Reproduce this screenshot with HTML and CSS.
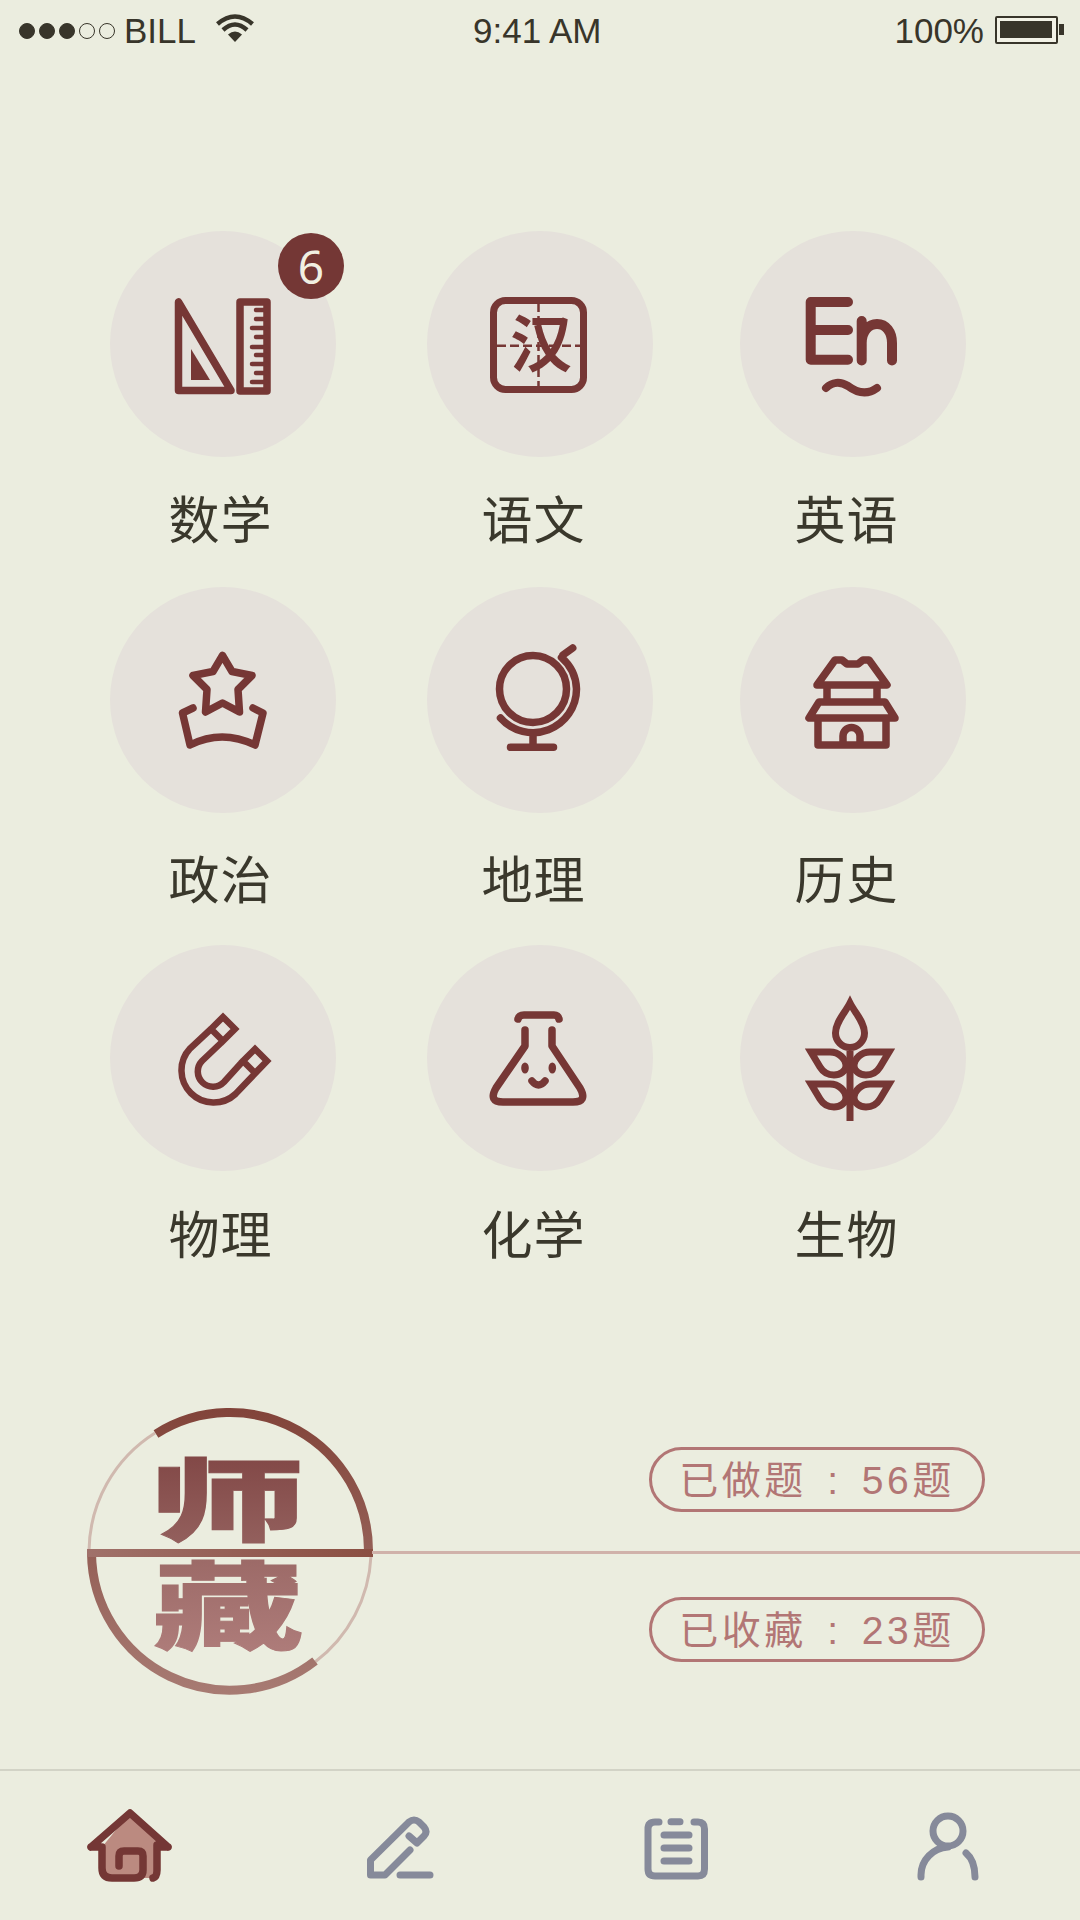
FILE: index.html
```html
<!DOCTYPE html>
<html lang="zh-CN">
<head>
<meta charset="utf-8">
<title>师藏</title>
<link rel="stylesheet" href="styles.css">
</head>
<body>
<div class="screen">
  <header class="status">
    <div class="status-left">
      <span class="dot on"></span><span class="dot on"></span><span class="dot on"></span><span class="dot"></span><span class="dot"></span>
      <span class="carrier">BILL</span>
      <svg class="wifi" viewBox="217 15 38 28"><path class="wifi-arc" d="M218.500 25Q236 10 253.500 25M224 31Q236 20 248 31"/><path class="wifi-fill" d="M229 35.500Q236 29.500 243 35.500L236 43Z"/></svg>
    </div>
    <div class="time">9:41 AM</div>
    <div class="status-right">
      <span>100%</span>
      <span class="battery"><span class="battery-level"></span></span><span class="battery-nub"></span>
    </div>
  </header>

  <main class="subjects">
    <div class="subject">
      <div class="disc">
        <svg class="ico" viewBox="110 231 226 226">
          <path class="thin" d="M178.500 302V390.500H231Z"/>
          <path class="solid" d="M191 349V380H210Z"/>
          <rect class="thin" x="240" y="302" width="27" height="89"/>
          <path class="tick" d="M267 310H256M267 319H256M267 328H252M267 337H256M267 347H252M267 355H256M267 364H252M267 373H256M267 382H252"/>
        </svg>
      </div>
      <span class="badge">6</span>
      <span class="label">数学</span>
    </div>
    <div class="subject mid">
      <div class="disc">
        <svg class="ico" viewBox="427 231 226 226">
          <rect x="493.500" y="300.500" width="90" height="89" rx="12"/>
          <path class="dash" d="M538.500 303V387M497 345.700H580"/>
          <text class="han" x="510" y="367">汉</text>
        </svg>
      </div>
      <span class="label">语文</span>
    </div>
    <div class="subject last">
      <div class="disc">
        <svg class="ico" viewBox="740 231 226 226">
          <path class="en" d="M848 302H810.700V359.700H848M810.700 330H848M861.700 321V360.500M861.700 343C861.700 331 869 324 877 324C886 324 892 332 892 343V360.500"/>
          <path class="en-tilde" d="M826 388C832 382 840 381 848 386C856 392 866 396 877 388"/>
        </svg>
      </div>
      <span class="label">英语</span>
    </div>

    <div class="subject row-two">
      <div class="disc">
        <svg class="ico" viewBox="110 587 226 226">
          <path class="bold" d="M222.500 655.500L232 671.500L252 675.500L238 689.500L239.500 712L222.500 703L205.500 712L207 689.500L193 675.500L213 671.500Z"/>
          <path class="bold" d="M193 708L182.500 713L190 745Q222 729 255 745L263 713L253 708"/>
        </svg>
      </div>
      <span class="label">政治</span>
    </div>
    <div class="subject mid row-two">
      <div class="disc">
        <svg class="ico" viewBox="427 587 226 226">
          <circle class="bold" cx="533" cy="689" r="33.500"/>
          <path class="bold" d="M561.500 657.500A43.500 43.500 0 0 1 576.500 689A43.500 43.500 0 0 1 500.500 718M563 655L572.700 648M533 733V747M510.500 747.300H553.500"/>
        </svg>
      </div>
      <span class="label">地理</span>
    </div>
    <div class="subject last row-two">
      <div class="disc">
        <svg class="ico" viewBox="740 587 226 226">
          <path class="bold" d="M817 685L835 660H842L847 664H858L863 660H869L887 685ZM827 685V702M877 685V702M819 702L809 718H895L885 702ZM818 718V745H886V718M843 745V736A8.500 8.500 0 0 1 860 736V745"/>
        </svg>
      </div>
      <span class="label">历史</span>
    </div>

    <div class="subject row-three">
      <div class="disc">
        <svg class="ico" viewBox="110 945 226 226">
          <path class="mag" d="M223 1017L235 1029L223 1041L211 1029ZM255 1049L267 1061L255 1073L243 1061ZM211 1029L190 1048.500A32.200 32.200 0 0 0 235.500 1094L267 1061M223 1041L202 1061A15.200 15.200 0 0 0 224 1082L243 1061"/>
        </svg>
      </div>
      <span class="label">物理</span>
    </div>
    <div class="subject mid row-three">
      <div class="disc">
        <svg class="ico" viewBox="427 945 226 226">
          <path class="bold" d="M518 1019Q519 1015 524 1015H554Q558 1015 559 1019M525 1030V1046L496 1088Q488 1102 503 1102H573Q588 1102 580 1088L552 1046V1030M532 1081Q538.500 1089 545 1081"/>
          <ellipse class="solid" cx="525" cy="1068" rx="3.800" ry="5.500"/>
          <ellipse class="solid" cx="552.300" cy="1068" rx="3.800" ry="5.500"/>
        </svg>
      </div>
      <span class="label">化学</span>
    </div>
    <div class="subject last row-three">
      <div class="disc">
        <svg class="ico" viewBox="740 945 226 226">
          <path class="wheat" d="M850 1003C855 1013 864.500 1022 864.500 1033A14.500 14.500 0 0 1 835.500 1033C835.500 1022 845 1013 850 1003ZM850 1047V1121"/>
          <path class="wheat" d="M811 1052H830C839 1052 846 1059 846 1066C846 1071 840 1075 834 1075C827 1075 823 1072 820 1067ZM889 1052H870C861 1052 854 1059 854 1066C854 1071 860 1075 866 1075C873 1075 877 1072 880 1067ZM811 1084H830C839 1084 846 1091 846 1098C846 1103 840 1107 834 1107C827 1107 823 1104 820 1099ZM889 1084H870C861 1084 854 1091 854 1098C854 1103 860 1107 866 1107C873 1107 877 1104 880 1099Z"/>
        </svg>
      </div>
      <span class="label">生物</span>
    </div>
  </main>

  <section class="summary">
    <div class="divider"></div>
    <svg class="logo" viewBox="80 1401 300 300">
      <defs>
        <linearGradient id="ringA" gradientUnits="userSpaceOnUse" x1="0" y1="1410" x2="0" y2="1700"><stop offset="0" stop-color="#82443a"/><stop offset="1" stop-color="#a87c74"/></linearGradient>
        <linearGradient id="bandA" gradientUnits="userSpaceOnUse" x1="87" y1="0" x2="373" y2="0"><stop offset="0" stop-color="#a0716a"/><stop offset="1" stop-color="#8b4f42"/></linearGradient>
        <linearGradient id="charA" x1="0" y1="0" x2="0" y2="1"><stop offset="0" stop-color="#7d4140"/><stop offset="1" stop-color="#966461"/></linearGradient>
        <linearGradient id="charB" x1="0" y1="0" x2="0" y2="1"><stop offset="0" stop-color="#976562"/><stop offset="1" stop-color="#b17f7d"/></linearGradient>
      </defs>
      <path class="ring-thin" d="M155 1433A141 141 0 0 0 89 1551M371 1556A141 141 0 0 1 315 1662"/>
      <path class="ring-bold" d="M156 1434A138.500 138.500 0 0 1 368.500 1553M91.500 1553A138.500 138.500 0 0 0 315 1661"/>
      <path class="ring-band" d="M87 1553H373"/>
      <text class="logo-char" fill="url(#charA)" stroke="url(#charA)" transform="translate(150 1534) scale(1.55 .9)">师</text>
      <text class="logo-char" fill="url(#charB)" stroke="url(#charB)" transform="translate(153 1642) scale(1.5 .95)">藏</text>
    </svg>
    <div class="stats">
      <div class="pill">已做题 : 56题</div>
      <div class="pill">已收藏 : 23题</div>
    </div>
  </section>

  <nav class="tabs">
    <svg class="tab-ico tab-home" viewBox="85 1805 90 78">
      <path class="home-fill" d="M130 1813L102 1847V1878H157V1847H169Z"/>
      <path class="home-line" d="M91 1847L130 1813L168 1847M91 1847H102M158 1847H168M102 1847V1868Q102 1878 112 1878H134Q143 1878 143 1870V1856Q143 1851 138 1851H124Q119 1851 119 1856V1866M157 1845V1870Q157 1877 153 1878"/>
    </svg>
    <svg class="tab-ico tab-pen" viewBox="365 1815 70 66">
      <path class="nav-line" d="M409 1836L417 1843L424 1836Q428 1832 424 1827L419 1822Q414 1818 409 1822L370.500 1860V1875H385L410 1850M400 1875H430"/>
    </svg>
    <svg class="tab-ico tab-list" viewBox="643 1816 68 66">
      <path class="nav-line" d="M659 1822H655Q648 1822 648 1829V1869Q648 1876 655 1876H698Q704.500 1876 704.500 1869V1829Q704.500 1822 698 1822H694M671 1821.700H680M664 1835H689M664 1848H689M664 1861H689"/>
    </svg>
    <svg class="tab-ico tab-user" viewBox="915 1810 66 72">
      <circle class="nav-line" cx="948" cy="1831" r="15"/>
      <path class="nav-line" d="M921 1877V1875C921 1860 933 1848 948 1847M966 1853C972 1858 975 1866 975 1877"/>
    </svg>
  </nav>
</div>
</body>
</html>
```

FILE: styles.css
```css
* { box-sizing: border-box; }
html, body { margin: 0; padding: 0; }
body { background: #ebeddf; font-family: "Noto Sans CJK SC", "Noto Sans", sans-serif; }
.screen { width: 1080px; height: 1920px; display: flex; flex-direction: column; overflow: hidden; background: #ebeddf; }

/* status bar */
.status { height: 60px; display: grid; grid-template-columns: 473px auto 1fr; align-items: start; padding-top: 11px; color: #38352a; font: 35px/40px "Liberation Sans", sans-serif; }
.status-left { display: flex; align-items: center; padding-left: 19px; height: 40px; }
.dot { width: 16px; height: 16px; border-radius: 50%; border: 1.5px solid #38352a; margin-right: 4px; margin-top: 0; }
.dot.on { background: #38352a; }
.carrier { margin-left: 5px; margin-right: 20px; }
.wifi { width: 38px; height: 28px; margin-top: -6px; }
.wifi-arc { fill: none; stroke: #38352a; stroke-width: 4.5; }
.wifi-fill { fill: #38352a; }
.status-right { display: flex; justify-content: flex-end; align-items: flex-start; padding-right: 16px; }
.battery { width: 63px; height: 28px; margin: 5px 0 0 11px; border: 2px solid #38352a; padding: 3px 4px 4px 3px; background: #f2f2e6; border-radius: 2px; }
.battery-level { display: block; height: 100%; background: #38352a; }
.battery-nub { width: 5px; height: 11px; margin: 13px 0 0 1px; background: #38352a; }

/* subject grid */
.subjects { display: grid; grid-template-columns: 317px 313px 226px; grid-template-rows: 356px 358px 290px; margin: 171px 0 0 110px; }
.subject { position: relative; display: flex; flex-direction: column; width: 226px; }
.disc { width: 226px; height: 226px; border-radius: 50%; background: #e5e1db; }
.label { display: block; margin-top: 35px; padding-right: 5px; text-align: center; color: #3a382c; font-size: 51px; line-height: 50px; letter-spacing: 1px; }
.mid .label, .last .label { padding-right: 13px; }
.row-two .label { margin-top: 39px; }
.row-three .label { margin-top: 36px; }
.badge { position: absolute; top: 2px; left: 168px; width: 66px; height: 66px; border-radius: 50%; background: #743735; color: #f1efe2; text-align: center; font: 46px/66px "Noto Sans", sans-serif; }

/* icons */
.ico { display: block; width: 226px; height: 226px; fill: none; stroke: #763735; stroke-width: 7; stroke-linecap: round; stroke-linejoin: round; }
.ico .solid { fill: #763735; stroke: none; }
.ico .thin { stroke-width: 7.5; }
.ico .bold { stroke-width: 7.5; }
.ico .tick { stroke-width: 4.5; }
.ico .dash { stroke-width: 2.5; stroke-dasharray: 9 4; stroke-linecap: butt; }
.ico .han { fill: #763735; stroke: none; font: 700 62px "Noto Sans CJK SC", sans-serif; }
.ico .en { stroke-width: 10; }
.ico .en-tilde { stroke-width: 8; }
.ico .mag { stroke-width: 6.5; stroke-linecap: butt; stroke-linejoin: miter; }
.ico .wheat { stroke-width: 7; stroke-linecap: butt; stroke-linejoin: miter; }

/* logo and stats */
.summary { position: relative; display: flex; margin-top: 166px; height: 300px; }
.divider { position: absolute; left: 372px; right: 0; top: 150px; height: 3px; background: #d0b2aa; }
.logo { display: block; width: 300px; height: 300px; margin-left: 80px; flex: none; }
.ring-thin { fill: none; stroke: #d0b9af; stroke-width: 3; }
.ring-bold { fill: none; stroke: url(#ringA); stroke-width: 9; }
.ring-band { fill: none; stroke: url(#bandA); stroke-width: 8; }
.logo-char { font: 900 100px "Noto Sans CJK SC", sans-serif; stroke-width: 1; }
.stats { display: flex; flex-direction: column; gap: 85px; margin: 46px 0 0 269px; }
.pill { width: 336px; height: 65px; border: 3px solid #b27675; border-radius: 33px; color: #b27675; text-align: center; font-family: "Liberation Sans", "Noto Sans CJK SC", sans-serif; font-size: 39px; line-height: 61px; letter-spacing: 3.5px; word-spacing: 6px; }

/* tab bar */
.tabs { position: relative; margin-top: 68px; flex: 1; border-top: 2px solid #d2d3c6; display: block; }
.tab-ico { position: absolute; display: block; }
.tab-home { left: 85px; top: 34px; width: 90px; height: 78px; }
.tab-pen { left: 365px; top: 44px; width: 70px; height: 66px; }
.tab-list { left: 643px; top: 45px; width: 68px; height: 66px; }
.tab-user { left: 915px; top: 39px; width: 66px; height: 72px; }
.home-fill { fill: #bb8a80; }
.home-line { fill: none; stroke: #743735; stroke-width: 7.5; stroke-linecap: round; stroke-linejoin: round; }
.nav-line { fill: none; stroke: #868a9a; stroke-width: 7; stroke-linecap: round; stroke-linejoin: round; }
```
